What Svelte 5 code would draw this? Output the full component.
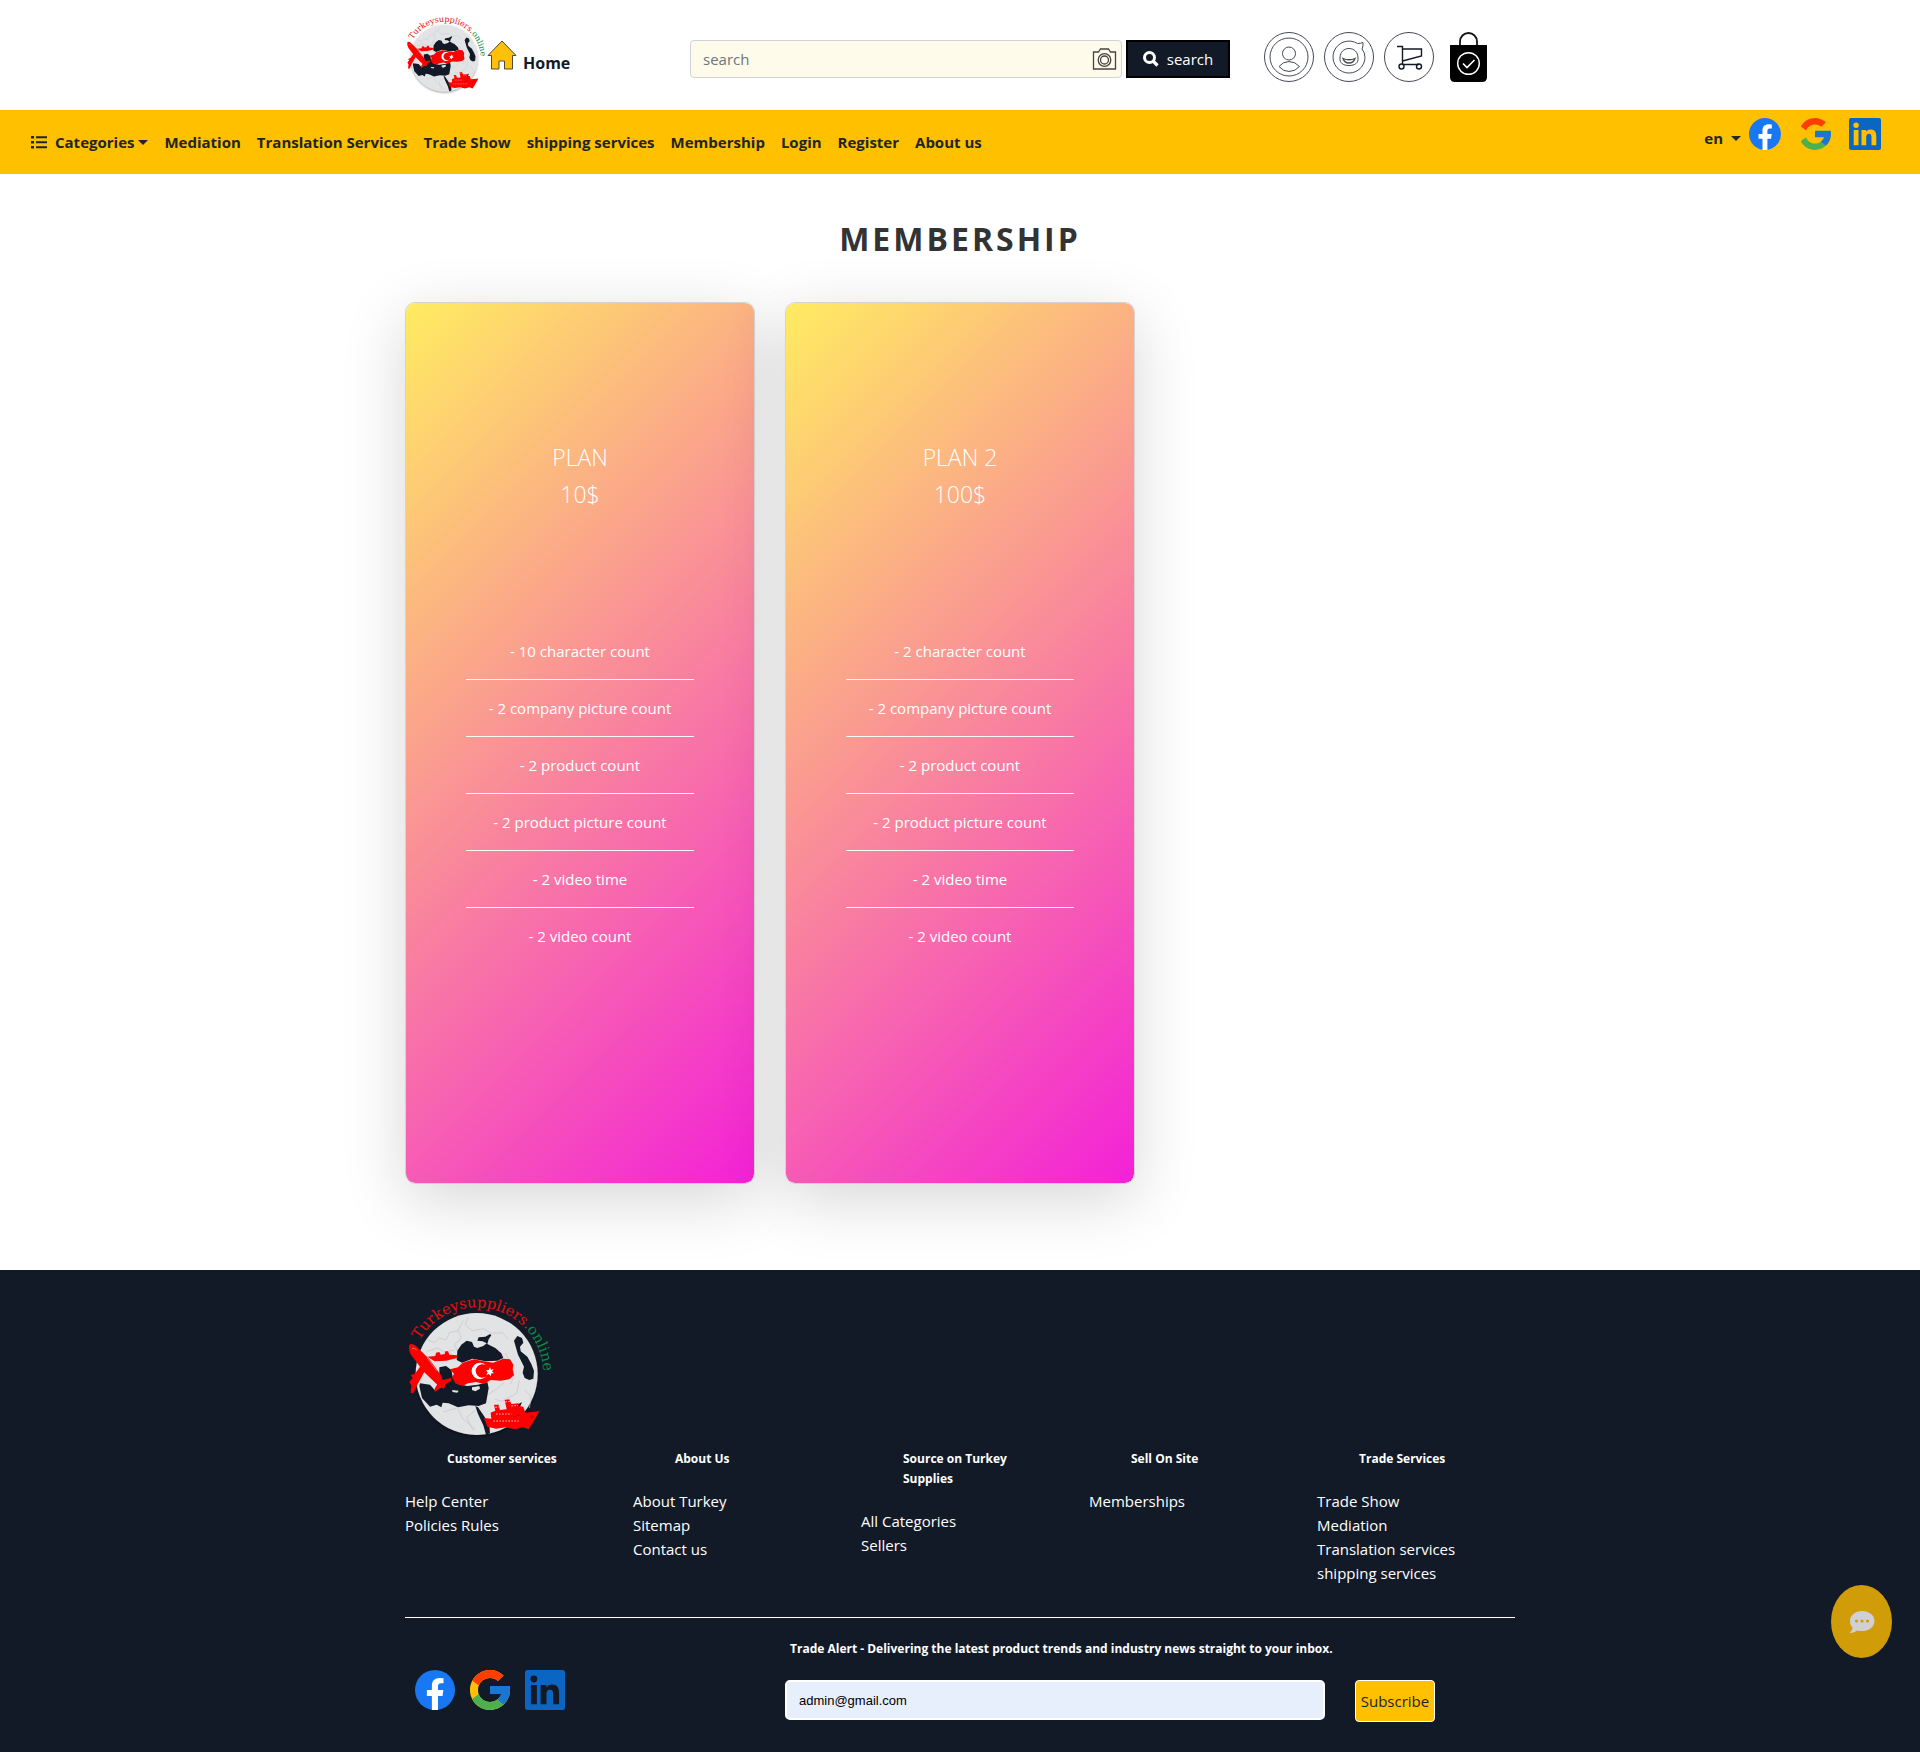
<script>
  const navLinks = [
    'Mediation', 'Translation Services', 'Trade Show', 'shipping services',
    'Membership', 'Login', 'Register', 'About us'
  ];

  const plans = [
    { name: 'PLAN', price: '10$', characters: 10 },
    { name: 'PLAN 2', price: '100$', characters: 2 }
  ];

  const features = (plan) => [
    `- ${plan.characters} character count`,
    '- 2 company picture count',
    '- 2 product count',
    '- 2 product picture count',
    '- 2 video time',
    '- 2 video count'
  ];

  const footerColumns = [
    { title: 'Customer services', links: ['Help Center', 'Policies Rules'] },
    { title: 'About Us', links: ['About Turkey', 'Sitemap', 'Contact us'] },
    { title: 'Source on Turkey Supplies', links: ['All Categories', 'Sellers'] },
    { title: 'Sell On Site', links: ['Memberships'] },
    { title: 'Trade Services', links: ['Trade Show', 'Mediation', 'Translation services', 'shipping services'] }
  ];

  let query = $state('');
  let email = $state('admin@gmail.com');
</script>

{#snippet logo(id)}
  <svg class="logo" viewBox="45 45 450 435" role="img" aria-label="Turkeysuppliers.online">
    <defs>
      <path id={id} d="M88 180A200 200 0 0 1 260 82A200 200 0 0 1 458 310" />
      <filter id="{id}-shade" x="-10%" y="-10%" width="120%" height="125%">
        <feDropShadow dx="0" dy="5" stdDeviation="5" flood-color="#000" flood-opacity="0.45" />
      </filter>
    </defs>
    <circle cx="260" cy="282" r="183" fill="#e2e3e5" filter="url(#{id}-shade)" />
    <g fill="none" stroke="#c3c4c8" stroke-width="2">
      <path d="M112 180l22 8 14-14 20 6 10-22 26-6 16-30M234 112l-8 22 20 18 34-6 24 14 34-2 16 20M204 150l10 26-20 16 8 22M112 214l30-10 22 12 30-6M346 220l18 30 8 40-10 22M388 300l-8 40-44 24-20-6M204 386l14 30 40 34M282 350l40-24 20-18M404 330l20 20-6 34M160 396l40-12M250 452l-20-40 38-30" />
    </g>
    <g fill="#131a27">
      <path d="M200 240l2-28 12-18 16-12 16 4 6 14 10 4 18-6 10-8-12-6-16-2 4-10 20-2 14-8 4 4-8 12-4 14 24 12 18 16 6 14-18 8-36 2-38-8-32 12z" />
      <path d="M372 182l10-14 14 6 4 14-10 12 2 14 20 16 12 22 8 20-2 24-12 4-14-6-6-16 4-18-10-20-8-16z" />
      <path d="M148 262l20-4 16 12 4 20 16 22 28 6 32-4 28-8 4 18-8 46-22 8-30-2-32 6-28-12-18-2-4 14-14-8-20 6-24-26-8-36 2-8 30 4 16 18 30-18-18-20z" />
      <path d="M256 378l8 4 18 26 16 26 2 26-12 4-8-28-16-34z" />
      <path d="M396 366l-8 20-10 4 2-14z" />
    </g>
    <path fill="#e2e3e5" d="M246 322l22-4 2 8-14 8-10-4zM186 330l20 2-4 6-14-2z" />
    <path fill="#f00" d="M180 268l24-6 14-14 34-10 28 6 30 4 30-12 20 2 10 16-2 14 4 18-14 12-26 4-30-2-20 12-24-6-24 4-16 8-22-8-10-18 6-10z" />
    <path fill="#fff" d="M289 257a25 25 0 1 0 0 32a20 20 0 1 1 0-32z" />
    <path fill="#fff" d="M300 261l3 8 8-2-5 7 6 6-8 0-2 9-5-7-8 3 4-8-5-6 8-1z" />
    <g fill="#f00">
      <path d="M58 194q8-6 20 4l40 40 34 46 14 36-6 6-14-8-44-42-38-50q-10-18-6-32z" />
      <path d="M112 230l24-2 2-10 10-2 4 8 12-2 2-8 8 0 4 10 24 2 0 8-34 8-34 2z" />
      <path d="M92 258l12 16-22 40-12 26-8-2 2-22-6-10 10-12-6-8 14-6z" />
      <path d="M148 302l36-8 0 8-20 12-30 22 0-10z" />
    </g>
    <path d="M66 206q8-4 14 4M112 234l28 38" stroke="#e8a0a0" stroke-width="2" fill="none" />
    <g fill="#f00">
      <path d="M282 414l22 2-2-18 14-6-4-18 14 0 4 16 20-2-6-28 14-2 6 14 22-2 0 8 14 2 6 18 42-4-18 32-14 22-18-6-24 6-26-6-30 4-26-6z" />
    </g>
    <path d="M310 423h76M318 402h46M346 366l14-2M316 382l14-2M364 378l20-2" stroke="#fbb" stroke-width="3" stroke-dasharray="5 4" fill="none" />
    <path d="M372 412l16-8" stroke="#700" stroke-width="2" />
    <circle cx="426" cy="411" r="4" fill="none" stroke="#a00" stroke-width="2" />
    <text class="logo-text" font-size="44"><textPath href="#{id}"><tspan fill="#e3100f">Turkeysuppliers.</tspan><tspan fill="#0b8a43">online</tspan></textPath></text>
  </svg>
{/snippet}

{#snippet socials()}
  <a href="#facebook" aria-label="Facebook">
    <svg viewBox="0 0 32 32">
      <circle cx="16" cy="16" r="16" fill="#1877f2" />
      <path fill="#fff" d="M13.500 32V20.700H9.500V16h4v-3.500c0-4 2.400-6.200 6-6.200 1.700 0 3.300.3 3.300.3v3.900h-2c-2 0-2.400 1.200-2.400 2.500v3h4.300l-.7 4.700h-3.600V32q-2.500.2-4.900 0z" />
    </svg>
  </a>
  <a href="#google" aria-label="Google">
    <svg viewBox="4 4 40 40">
      <path fill="#ffc107" d="M43.611 20.083H42V20H24v8h11.303C33.654 32.657 29.223 36 24 36c-6.627 0-12-5.373-12-12s5.373-12 12-12c3.059 0 5.842 1.154 7.961 3.039l5.657-5.657C34.046 6.053 29.268 4 24 4 12.955 4 4 12.955 4 24s8.955 20 20 20 20-8.955 20-20c0-1.341-.138-2.650-.389-3.917z" />
      <path fill="#ff3d00" d="M6.306 14.691l6.571 4.819C14.655 15.108 18.961 12 24 12c3.059 0 5.842 1.154 7.961 3.039l5.657-5.657C34.046 6.053 29.268 4 24 4 16.318 4 9.656 8.337 6.306 14.691z" />
      <path fill="#4caf50" d="M24 44c5.166 0 9.860-1.977 13.409-5.192l-6.190-5.238C29.211 35.091 26.715 36 24 36c-5.202 0-9.619-3.317-11.283-7.946l-6.522 5.025C9.505 39.556 16.227 44 24 44z" />
      <path fill="#1976d2" d="M43.611 20.083H42V20H24v8h11.303c-.792 2.237-2.231 4.166-4.087 5.571l6.193 5.238C36.971 39.205 44 34 44 24c0-1.341-.138-2.650-.389-3.917z" />
    </svg>
  </a>
  <a href="#linkedin" aria-label="LinkedIn">
    <svg viewBox="0 0 32 32">
      <path fill="#0a66c2" fill-rule="evenodd" d="M2 0h28q2 0 2 2v28q0 2-2 2H2q-2 0-2-2V2q0-2 2-2zM4.700 12v15.300h4.800V12zM7.100 4.400a2.750 2.750 0 1 0 0 5.500 2.750 2.750 0 0 0 0-5.500zM12.500 12v15.300h4.700v-7.600c0-2 .4-3.900 2.900-3.900 2.400 0 2.400 2.300 2.400 4.100v7.400h4.800v-8.400c0-4.100-.9-7.300-5.700-7.300-2.300 0-3.800 1.300-4.500 2.500V12z" />
    </svg>
  </a>
{/snippet}

<header class="container top">
  <a class="brand" href="#top">{@render logo('header-arc')}</a>
  <a class="home" href="#home">
    <svg viewBox="0 0 30 30" aria-hidden="true">
      <path d="M15 1L1 15.500h3.500V29H12v-8h5.500v8h8V15.500H29z" fill="#ffc107" stroke="#4d4a3e" stroke-width="1" />
    </svg>
    <span>Home</span>
  </a>
  <form class="search" onsubmit={(e) => e.preventDefault()}>
    <div class="search-box">
      <input type="text" placeholder="search" aria-label="search" bind:value={query} />
      <button class="camera" type="button" aria-label="Search by picture">
        <svg viewBox="0 0 25 22" fill="none" stroke="#444" stroke-width="1.300">
          <path d="M1.500 4H6.500L8.500 1H16.500L18.500 4H23.500V21H1.500z" />
          <circle cx="12.500" cy="12" r="6.300" />
          <circle cx="12.500" cy="12" r="4" />
        </svg>
      </button>
    </div>
    <button class="search-button" type="submit">
      <svg viewBox="0 0 16 16" fill="none" stroke="#fff" aria-hidden="true">
        <circle cx="6.500" cy="6.500" r="5" stroke-width="3" />
        <path d="M10.500 10.500L14.500 14.500" stroke-width="3.200" />
      </svg>
      search
    </button>
  </form>
  <div class="actions">
    <a href="#account" aria-label="Account">
      <svg viewBox="0 0 50 50" fill="none" stroke="#454a55">
        <circle cx="25" cy="25" r="24.500" />
        <circle cx="25" cy="25" r="19" />
        <circle cx="25" cy="21.500" r="6.500" />
        <path d="M15 34.500Q19 29.500 25 29.500T35.500 34.500Q31 39.500 25 39.500T15 34.500z" />
      </svg>
    </a>
    <a href="#messages" aria-label="Messages">
      <svg viewBox="0 0 50 50" fill="none" stroke="#454a55">
        <circle cx="25" cy="25" r="24.500" />
        <path d="M33.500 11.500Q37 11.500 39 10.500Q39.500 14 38 17Q41 20.500 41 25.500A16 16 0 1 1 33.500 11.500z" />
        <path d="M25 16.500C30 16.500 34 20 34 26C34.500 31 31 33.500 25 33.500S15.500 31 16 26C16 20 20 16.500 25 16.500z" />
        <path d="M19 26.500Q25 29 31 26.500Q29.500 31 25 31T19 26.500z" stroke-width="1.300" />
      </svg>
    </a>
    <a href="#cart" aria-label="Cart">
      <svg viewBox="0 0 50 50" fill="none" stroke="#131a27" stroke-width="1.400">
        <circle cx="25" cy="25" r="24.500" stroke="#454a55" stroke-width="1" />
        <path d="M13 14.500H18.500V32.500M18.500 17H37.500V24L18.500 29M18.500 32.500H35" />
        <circle cx="17.500" cy="34.500" r="2.500" />
        <circle cx="35" cy="34.500" r="2.500" />
      </svg>
    </a>
    <a class="bag" href="#orders" aria-label="Orders">
      <svg viewBox="0 0 37 50" fill="none">
        <path d="M10 14V9.500A8.500 8.500 0 0 1 27 9.500V14" stroke="#131313" stroke-width="1.800" />
        <path d="M0 13H37V45Q37 50 32 50H5Q0 50 0 45z" fill="#000" />
        <circle cx="18.500" cy="31.500" r="10.800" stroke="#fff" stroke-width="1.400" />
        <path d="M13 31.500L17 35.500L24.500 28" stroke="#fff" stroke-width="1.600" />
      </svg>
    </a>
  </div>
</header>

<nav class="bar">
  <div class="menu">
    <button class="drop categories" type="button">
      <svg viewBox="0 0 16 14" fill="#212529" aria-hidden="true">
        <path d="M0 1h3v2.500H0zM0 6h3v2.500H0zM0 11h3v2.500H0zM5 1.300h11v1.900H5zM5 6.300h11v1.900H5zM5 11.300h11v1.900H5z" />
      </svg>
      Categories<span class="caret"></span>
    </button>
    {#each navLinks as label}
      <a href="#{label}">{label}</a>
    {/each}
  </div>
  <div class="side">
    <button class="drop language" type="button">en<span class="caret"></span></button>
    <div class="social">{@render socials()}</div>
  </div>
</nav>

<main class="container">
  <h1>MEMBERSHIP</h1>
  <div class="plans">
    {#each plans as plan}
      <section class="plan">
        <h2>{plan.name}<br />{plan.price}</h2>
        <ul>
          {#each features(plan) as feature}
            <li>{feature}</li>
          {/each}
        </ul>
      </section>
    {/each}
  </div>
</main>

<footer>
  <div class="container">
    <a class="footer-brand" href="#top">{@render logo('footer-arc')}</a>
    <div class="columns">
      {#each footerColumns as column}
        <section>
          <h3>{column.title}</h3>
          {#each column.links as link}
            <a href="#{link}">{link}</a>
          {/each}
        </section>
      {/each}
    </div>
    <div class="bottom">
      <div class="social large">{@render socials()}</div>
      <form class="subscribe" onsubmit={(e) => e.preventDefault()}>
        <label for="alert-email">Trade Alert - Delivering the latest product trends and industry news straight to your inbox.</label>
        <div class="subscribe-row">
          <input id="alert-email" type="email" bind:value={email} />
          <button type="submit">Subscribe</button>
        </div>
      </form>
    </div>
  </div>
</footer>

<button class="chat" type="button" aria-label="Chat">
  <svg viewBox="0 0 26 24" aria-hidden="true">
    <path fill="#d0d0d3" d="M13 1C6 1 1 5.500 1 11c0 3 1 5 2.500 6.500C3.500 20 2 21.500 .5 23c3 .2 5.500-.8 7.500-2.500 1.600.4 3.200.6 5 .6 7 0 12.500-4.500 12.500-10.100S20 1 13 1z" />
    <g fill="#d09c08"><circle cx="7.500" cy="11" r="1.600" /><circle cx="13" cy="11" r="1.600" /><circle cx="18.500" cy="11" r="1.600" /></g>
  </svg>
</button>

<style>
  :global(body) {
    margin: 0;
    background: #fff;
    color: #212529;
    font: 15px/24px "Open Sans", "Noto Sans", sans-serif;
  }
  :global(*) { box-sizing: border-box; }
  a { color: inherit; text-decoration: none; }
  button, input { font: inherit; color: inherit; }
  button { padding: 0; border: 0; background: none; cursor: pointer; }
  svg { display: block; }

  .container {
    max-width: 1140px;
    margin: 0 auto;
    padding: 0 15px;
  }
  .logo { width: 100%; overflow: visible; }
  .logo-text { font-family: "DejaVu Serif", serif; }

  .top {
    display: flex;
    align-items: center;
    height: 110px;
  }
  .brand { width: 82px; }
  .home {
    display: flex;
    align-items: center;
    gap: 6px;
    color: #131a27;
    font-size: 16px;
    font-weight: 700;
  }
  .home svg { width: 30px; height: 30px; }
  .home span { padding-top: 16px; }
  .search {
    display: flex;
    gap: 4px;
    width: 540px;
    margin: 8px 34px 0 auto;
  }
  .search-box {
    display: flex;
    align-items: center;
    flex: 1;
    height: 38px;
    padding: 0 4px 0 12px;
    border: 1px solid #ced4da;
    border-radius: 4px;
    background: #fffbeb;
  }
  .search-box input {
    flex: 1;
    min-width: 0;
    padding: 0;
    border: 0;
    outline: 0;
    background: none;
  }
  .search-box input::placeholder { color: #6c757d; opacity: 1; }
  .camera svg { width: 25px; height: 22px; }
  .search-button {
    display: flex;
    align-items: center;
    justify-content: center;
    gap: 8px;
    width: 104px;
    border: 2px solid #000;
    background: #131a27;
    color: #fff;
  }
  .search-button svg { width: 16px; height: 16px; }
  .actions {
    display: flex;
    gap: 10px;
    margin: 4px 28px 0 0;
  }
  .actions svg { width: 50px; height: 50px; }
  .actions .bag { margin-left: 6px; }
  .actions .bag svg { width: 37px; }

  .bar {
    display: flex;
    justify-content: space-between;
    height: 64px;
    padding: 0 39px 0 31px;
    background: #ffc000;
    font-weight: 700;
    white-space: nowrap;
  }
  .menu { display: flex; align-items: center; gap: 16px; }
  .drop { display: flex; align-items: center; font-weight: 700; }
  .categories svg { width: 16px; height: 14px; margin-right: 8px; }
  .caret {
    margin-left: 4px;
    border: 5px solid transparent;
    border-top-color: #212529;
    border-bottom: 0;
  }
  .side { display: flex; align-items: flex-start; gap: 8px; padding-top: 8px; }
  .language { height: 40px; }
  .language .caret { margin-left: 8px; }
  .social { display: flex; gap: 18px; }
  .social svg { width: 32px; height: 32px; }

  h1 {
    margin: 0;
    padding: 41px 0 39px;
    color: #333;
    font-size: 32px;
    line-height: 48px;
    font-weight: 700;
    letter-spacing: 3px;
    text-align: center;
  }
  .plans {
    display: grid;
    grid-template-columns: repeat(3, 1fr);
    gap: 30px;
    padding-bottom: 86px;
  }
  .plan {
    min-height: 882px;
    padding: 136px 60px 0;
    border: 1px solid #d3d3d3;
    border-radius: 10px;
    background: linear-gradient(135deg, #ffec61, #f321d7) padding-box;
    box-shadow: 0 16px 64px rgba(0, 0, 0, 0.16);
    color: #fff;
    text-align: center;
  }
  h2 {
    margin: 0 0 110px;
    font-size: 23px;
    line-height: 37px;
    font-weight: 300;
  }
  ul { margin: 0; padding: 0; list-style: none; }
  li { padding: 16px 0; border-bottom: 1px solid #f8f9fa; }
  li:last-child { border-bottom: 0; }

  footer { padding: 25px 0 30px; background: #131a27; color: #fff; }
  .footer-brand { display: block; width: 150px; }
  .columns {
    display: grid;
    grid-template-columns: repeat(5, 1fr);
    gap: 30px;
    padding: 9px 0 32px;
    border-bottom: 1px solid #fff;
  }
  h3 {
    margin: 0 0 20px;
    padding-left: 42px;
    font-size: 12px;
    line-height: 20px;
    font-weight: 700;
  }
  .columns a { display: block; }
  .bottom { display: flex; justify-content: space-between; padding-top: 21px; }
  .large { gap: 15px; padding: 31px 0 0 10px; }
  .large svg { width: 40px; height: 40px; }
  .subscribe { width: 730px; }
  .subscribe label {
    display: block;
    padding-left: 5px;
    font-size: 12px;
    line-height: 20px;
    font-weight: 700;
  }
  .subscribe-row {
    display: flex;
    align-items: flex-start;
    gap: 30px;
    margin-top: 21px;
  }
  .subscribe input {
    width: 540px;
    height: 40px;
    padding: 0 12px;
    border: 2px solid #fff;
    border-radius: 5px;
    background: #e8effc;
    color: #000;
    font: 13px "Liberation Sans", sans-serif;
  }
  .subscribe button {
    width: 80px;
    height: 42px;
    border: 1px solid #fff;
    border-radius: 4px;
    background: #ffc000;
    color: #212529;
  }
  .chat {
    position: fixed;
    right: 28px;
    bottom: 94px;
    display: flex;
    align-items: center;
    justify-content: center;
    width: 61px;
    height: 73px;
    border-radius: 50%;
    background: #d09c08;
  }
  .chat svg { width: 26px; height: 24px; }
</style>
